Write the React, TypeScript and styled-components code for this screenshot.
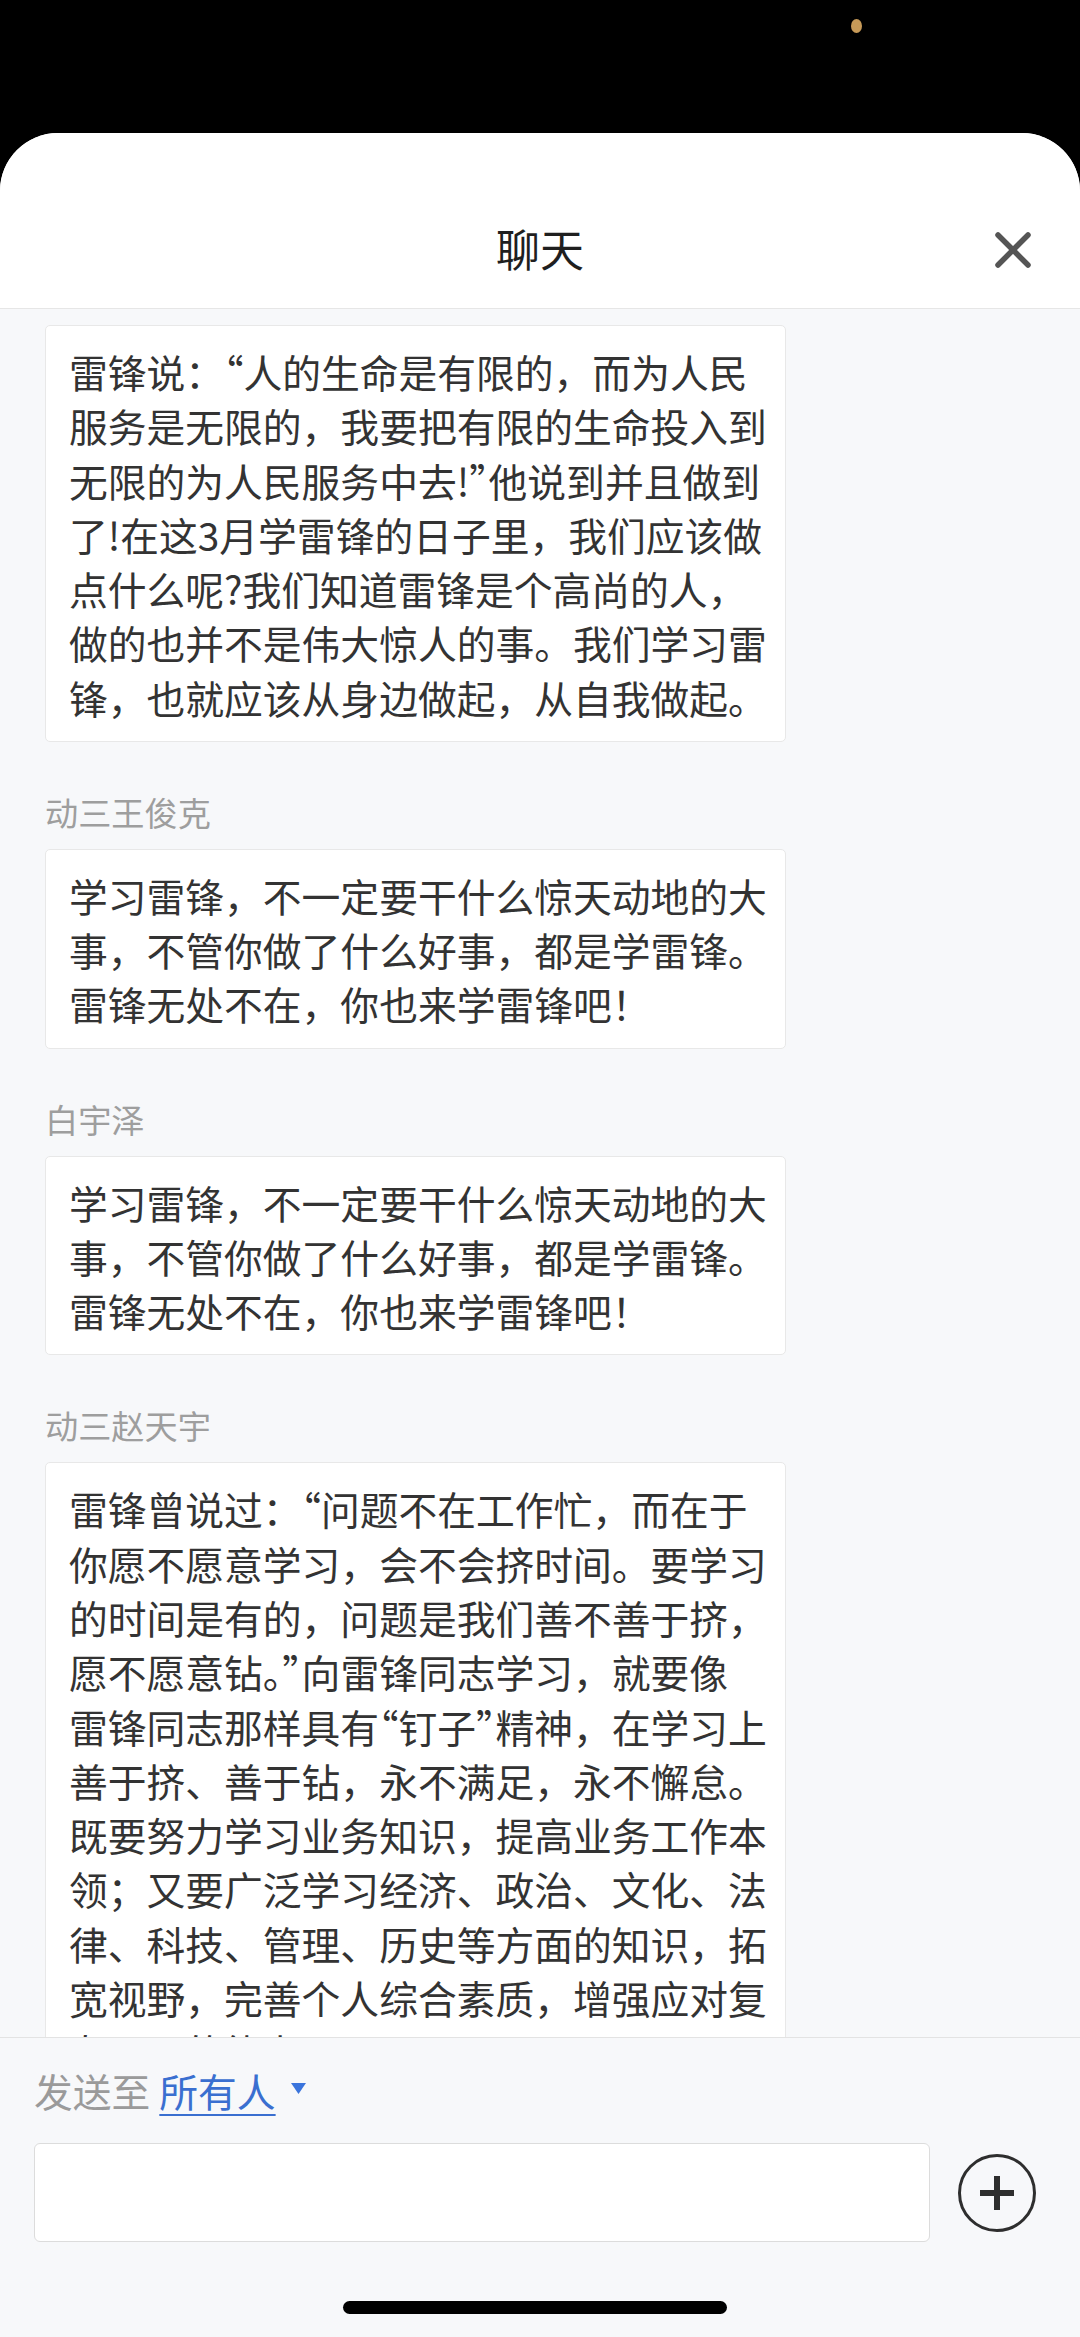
import React from "react";
import styled, { createGlobalStyle } from "styled-components";

const GlobalStyle = createGlobalStyle`
  html, body {
    margin: 0;
    padding: 0;
    background: #000;
    width: 1080px;
  }
  * { box-sizing: border-box; }
  body {
    font-family: "Noto Sans CJK SC", "Noto Sans", sans-serif;
  }
`;

const Screen = styled.div`
  width: 1080px;
  height: 2337px;
  display: flex;
  flex-direction: column;
  background: #000;
  overflow: hidden;
`;

const StatusBar = styled.div`
  height: 133px;
  flex: 0 0 133px;
  display: flex;
  justify-content: flex-end;
  padding: 19px 218px 0 0;
`;

const CameraDot = styled.div`
  width: 11px;
  height: 14px;
  border-radius: 50%;
  background: #c79a58;
`;

const Sheet = styled.div`
  flex: 1;
  min-height: 0;
  display: flex;
  flex-direction: column;
  background: #fff;
  border-radius: 58px 58px 0 0;
  overflow: hidden;
`;

const Header = styled.header`
  flex: 0 0 176px;
  padding-top: 59px;
  border-bottom: 1px solid #e6e6e6;
  background: #fff;
`;

const TitleRow = styled.div`
  height: 116px;
  display: grid;
  grid-template-columns: 1fr auto 1fr;
  align-items: center;
`;

const Title = styled.h1`
  grid-column: 2;
  margin: 0;
  font-size: 44px;
  line-height: 60px;
  font-weight: 400;
  color: #1f1f1f;
  transform: translateY(-2px);
`;

const CloseButton = styled.button`
  grid-column: 3;
  justify-self: end;
  margin-right: 49px;
  width: 36px;
  height: 36px;
  padding: 0;
  border: none;
  background: transparent;
  display: flex;
  align-items: center;
  justify-content: center;
`;

const Content = styled.main`
  flex: 1;
  min-height: 0;
  overflow: hidden;
  background: #f7f8fa;
  padding: 16px 0 0 45px;
  display: flex;
  flex-direction: column;
  gap: 47px;
`;

const MessageGroup = styled.section`
  display: flex;
  flex-direction: column;
  gap: 14px;
  width: 741px;
`;

const SenderName = styled.div`
  font-size: 33.2px;
  line-height: 46px;
  color: #9e9e9e;
`;

const Bubble = styled.div`
  width: 741px;
  background: #fff;
  border: 1px solid #e8e8e8;
  border-radius: 5px;
  padding: 18px 16px 17px 23px;
  font-size: 38.77px;
  line-height: 54.27px;
  color: #333;
  white-space: pre;
`;

const Quote = styled.span`
  font-feature-settings: "halt" 1;
`;

const Footer = styled.footer`
  flex: 0 0 300px;
  border-top: 1px solid #e3e3e3;
  background: #f7f8fa;
  padding: 29px 44px 0 34px;
  display: flex;
  flex-direction: column;
`;

const SendRow = styled.div`
  height: 46px;
  display: flex;
  align-items: center;
  font-size: 38.77px;
  line-height: 46px;
  color: #9a9a9a;
`;

const Recipient = styled.span`
  margin-left: 9px;
  color: #3a6fd0;
  text-decoration: underline;
  text-decoration-thickness: 2px;
  text-underline-offset: 7px;
`;

const Caret = styled.svg`
  margin-left: 15px;
  margin-top: -4px;
`;

const InputRow = styled.div`
  margin-top: 30px;
  height: 99px;
  display: flex;
  align-items: center;
  gap: 28px;
`;

const MessageInput = styled.div`
  flex: 1;
  height: 99px;
  background: #fff;
  border: 1.5px solid #dcdcdc;
  border-radius: 6px;
`;

const PlusButton = styled.div`
  width: 78px;
  height: 78px;
  border: 3px solid #2e2e2e;
  border-radius: 50%;
  display: flex;
  align-items: center;
  justify-content: center;
`;

const HomeIndicator = styled.div`
  margin: 59px auto 0;
  width: 384px;
  height: 13px;
  border-radius: 7px;
  background: #000;
`;

type Msg = { name?: string; text: string };

const messages: Msg[] = [
  {
    text: [
      "雷锋说：“人的生命是有限的，而为人民",
      "服务是无限的，我要把有限的生命投入到",
      "无限的为人民服务中去!”他说到并且做到",
      "了!在这3月学雷锋的日子里，我们应该做",
      "点什么呢?我们知道雷锋是个高尚的人，",
      "做的也并不是伟大惊人的事。我们学习雷",
      "锋，也就应该从身边做起，从自我做起。",
    ].join("\n"),
  },
  {
    name: "动三王俊克",
    text: [
      "学习雷锋，不一定要干什么惊天动地的大",
      "事，不管你做了什么好事，都是学雷锋。",
      "雷锋无处不在，你也来学雷锋吧！",
    ].join("\n"),
  },
  {
    name: "白宇泽",
    text: [
      "学习雷锋，不一定要干什么惊天动地的大",
      "事，不管你做了什么好事，都是学雷锋。",
      "雷锋无处不在，你也来学雷锋吧！",
    ].join("\n"),
  },
  {
    name: "动三赵天宇",
    text: [
      "雷锋曾说过：“问题不在工作忙，而在于",
      "你愿不愿意学习，会不会挤时间。要学习",
      "的时间是有的，问题是我们善不善于挤，",
      "愿不愿意钻。”向雷锋同志学习，就要像",
      "雷锋同志那样具有“钉子”精神，在学习上",
      "善于挤、善于钻，永不满足，永不懈怠。",
      "既要努力学习业务知识，提高业务工作本",
      "领；又要广泛学习经济、政治、文化、法",
      "律、科技、管理、历史等方面的知识，拓",
      "宽视野，完善个人综合素质，增强应对复",
      "杂局面的能力。",
    ].join("\n"),
  },
];

function renderText(text: string) {
  return text.split(/([“”])/).map((part, i) =>
    part === "“" || part === "”" ? <Quote key={i}>{part}</Quote> : part
  );
}

export default function App() {
  return (
    <>
      <GlobalStyle />
      <Screen>
        <StatusBar>
          <CameraDot />
        </StatusBar>
        <Sheet>
          <Header>
            <TitleRow>
              <Title>聊天</Title>
              <CloseButton aria-label="关闭">
                <svg width="36" height="36" viewBox="0 0 36 36">
                  <path
                    d="M3 3 L33 33 M33 3 L3 33"
                    stroke="#555"
                    strokeWidth="5.5"
                    strokeLinecap="round"
                    fill="none"
                  />
                </svg>
              </CloseButton>
            </TitleRow>
          </Header>
          <Content>
            {messages.map((m, i) => (
              <MessageGroup key={i}>
                {m.name && <SenderName>{m.name}</SenderName>}
                <Bubble>{renderText(m.text)}</Bubble>
              </MessageGroup>
            ))}
          </Content>
          <Footer>
            <SendRow>
              <span>发送至</span>
              <Recipient>所有人</Recipient>
              <Caret width="15" height="11" viewBox="0 0 15 11">
                <path d="M0 0 H15 L7.5 11 Z" fill="#3a74dc" />
              </Caret>
            </SendRow>
            <InputRow>
              <MessageInput />
              <PlusButton>
                <svg width="34" height="34" viewBox="0 0 34 34">
                  <path
                    d="M17 0 V34 M0 17 H34"
                    stroke="#2e2e2e"
                    strokeWidth="6"
                    fill="none"
                  />
                </svg>
              </PlusButton>
            </InputRow>
            <HomeIndicator />
          </Footer>
        </Sheet>
      </Screen>
    </>
  );
}
